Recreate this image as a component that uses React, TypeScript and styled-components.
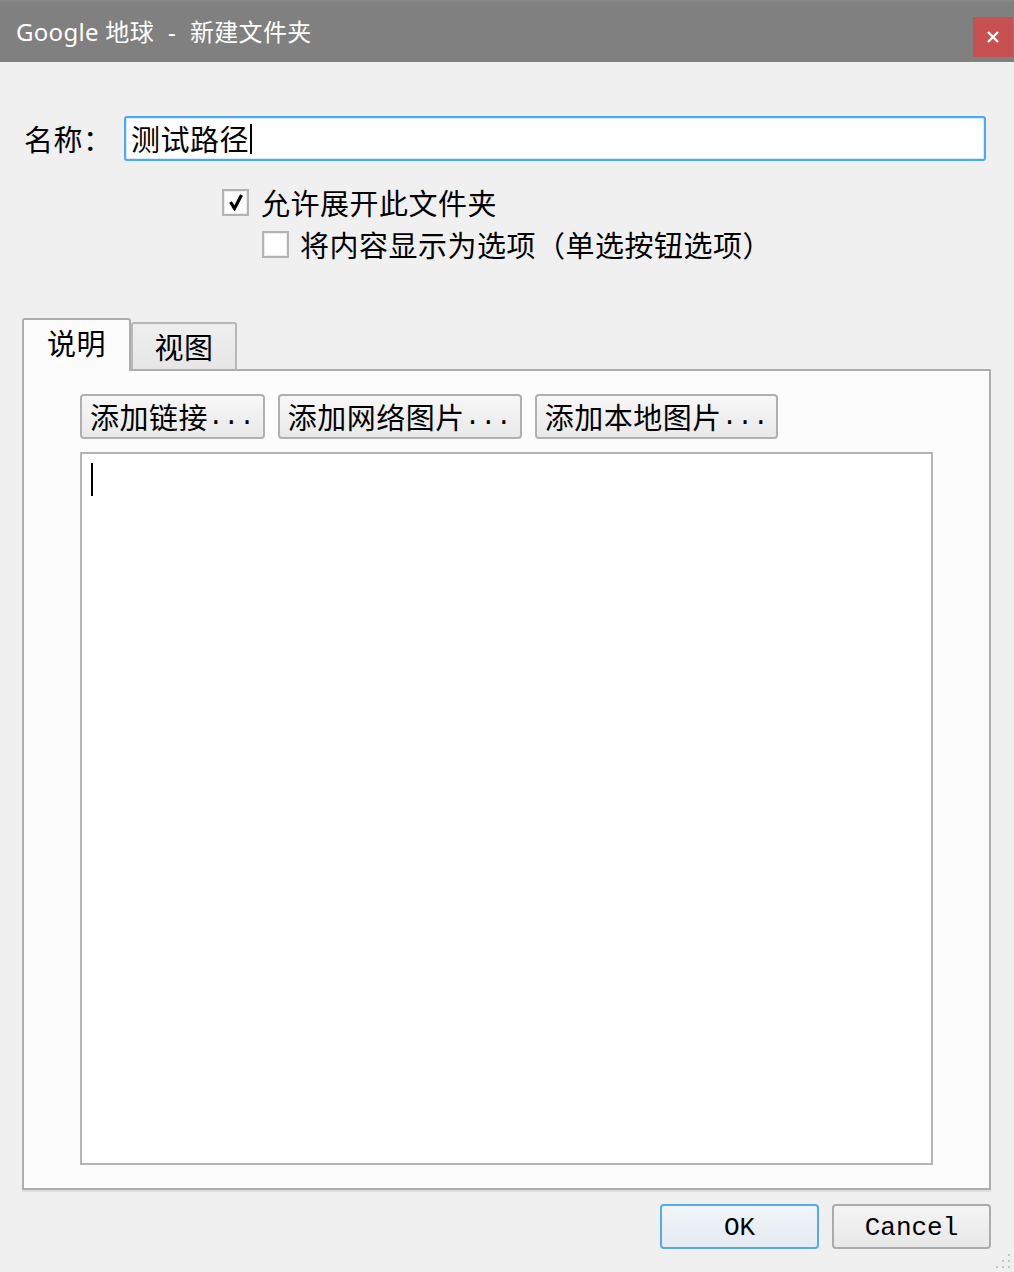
import React from "react";
import styled, { createGlobalStyle } from "styled-components";

const GlobalStyle = createGlobalStyle`
  html, body { margin: 0; padding: 0; background: #f0f0f0; }
  * { box-sizing: border-box; }
`;

const CJK = `"Noto Sans CJK SC", "Noto Sans", sans-serif`;

const Window = styled.div`
  position: relative;
  width: 1014px;
  height: 1272px;
  background: #f0f0f0;
  display: flex;
  flex-direction: column;
  font-family: ${CJK};
  color: #000;
  overflow: hidden;
`;

const TitleBar = styled.div`
  height: 62px;
  flex: none;
  background: #808080;
  border-top: 2px solid #888888;
  display: flex;
  align-items: center;
  justify-content: space-between;
  padding-left: 16px;
`;

const Title = styled.div`
  font-family: "Noto Sans", "Noto Sans CJK SC", sans-serif;
  font-size: 24px;
  color: #ffffff;
  white-space: pre;
  line-height: 1;
  letter-spacing: 0.3px;
`;

const Separator = styled.span`
  padding: 0 14px 0 14px;
`;

const CloseButton = styled.div`
  align-self: flex-start;
  margin-top: 15px;
  margin-right: 1px;
  width: 40px;
  height: 40px;
  background: #c75050;
  display: flex;
  align-items: center;
  justify-content: center;
`;

const Content = styled.div`
  flex: 1;
  display: flex;
  flex-direction: column;
  padding: 0 23px 0 22px;
  font-size: 29px;
  letter-spacing: 0.5px;
`;

const NameRow = styled.div`
  display: flex;
  align-items: center;
  margin-top: 54px;
  padding-left: 2px;
  margin-right: 5px;
`;

const Label = styled.div`
  width: 100px;
  flex: none;
  line-height: 1;
`;

const TextInput = styled.div`
  flex: 1;
  height: 45px;
  background: #ffffff;
  border: 2px solid #4aa9fb;
  border-radius: 3px;
  box-shadow: inset 0 0 0 1px #d9ecfd;
  display: flex;
  align-items: center;
  padding-left: 5px;
  font-size: 29px;
  line-height: 1;
`;

const Caret = styled.span<{ $h: number }>`
  display: inline-block;
  width: 2px;
  height: ${(p) => p.$h}px;
  background: #000;
  margin-left: 1px;
`;

const CheckRow = styled.div<{ $indent: number; $gap: number }>`
  display: flex;
  align-items: center;
  height: 42px;
  margin-left: ${(p) => p.$indent}px;
  gap: ${(p) => p.$gap}px;
  line-height: 1;
`;

const FirstCheckRow = styled(CheckRow)`
  margin-top: 20px;
`;

const Box = styled.div`
  width: 27px;
  height: 27px;
  flex: none;
  background: #ffffff;
  border: 2px solid #b3b3b3;
  box-shadow: inset 0 0 0 1px #ececec;
  display: flex;
  align-items: center;
  justify-content: center;
`;

const Tabs = styled.div`
  margin-top: 53px;
  flex: 1;
  display: flex;
  flex-direction: column;
`;

const TabRow = styled.div`
  display: flex;
  align-items: flex-end;
`;

const Tab = styled.div<{ $active?: boolean }>`
  position: relative;
  z-index: ${(p) => (p.$active ? 1 : 0)};
  width: ${(p) => (p.$active ? 109 : 106)}px;
  height: ${(p) => (p.$active ? 53 : 47)}px;
  margin-bottom: ${(p) => (p.$active ? -2 : 0)}px;
  background: ${(p) =>
    p.$active ? "#fcfcfc" : "linear-gradient(#efefef, #e6e6e6)"};
  border: 2px solid ${(p) => (p.$active ? "#adadad" : "#b8b8b8")};
  border-bottom: none;
  border-radius: 3px 3px 0 0;
  display: flex;
  align-items: center;
  justify-content: center;
  padding-bottom: ${(p) => (p.$active ? 7 : 0)}px;
  font-size: 29px;
  line-height: 1;
`;

const Pane = styled.div`
  flex: 1;
  background: #fcfcfc;
  border: 2px solid #adadad;
  box-shadow: 0 2px 0 #dedede;
  display: flex;
  flex-direction: column;
  padding: 23px 56px 23px 56px;
`;

const ButtonRow = styled.div`
  display: flex;
  gap: 13px;
`;

const Button = styled.div`
  height: 45px;
  padding: 0 8px;
  border: 2px solid #b0b0b0;
  border-radius: 4px;
  background: linear-gradient(#f7f7f7, #e9e9e9);
  display: flex;
  align-items: center;
  font-size: 29px;
  line-height: 1;
  white-space: pre;
`;

const Latin = styled.span`
  font-family: "Liberation Mono", monospace;
  font-size: 26px;
  letter-spacing: 0;
`;

const TextArea = styled.div`
  margin-top: 13px;
  flex: 1;
  background: #ffffff;
  border: 2px solid #b4b4b4;
  padding: 8px 8px;
`;

const Footer = styled.div`
  display: flex;
  justify-content: flex-end;
  gap: 13px;
  margin: 14px 23px 23px 0;
  flex: none;
`;

const DialogButton = styled.div<{ $default?: boolean }>`
  width: 159px;
  height: 45px;
  border: 2px solid ${(p) => (p.$default ? "#55a9f0" : "#ababab")};
  border-radius: 4px;
  background: ${(p) =>
    p.$default
      ? "linear-gradient(#f1f5f9, #e5ebf1)"
      : "linear-gradient(#f4f4f4, #e8e8e8)"};
  display: flex;
  align-items: center;
  justify-content: center;
  padding-top: 3px;
  font-family: "Liberation Mono", monospace;
  font-size: 26px;
  line-height: 1;
`;

const Grip = styled.svg`
  position: absolute;
  right: 2px;
  bottom: 2px;
`;

const Check = () => (
  <svg width="16" height="18" viewBox="0 0 16 18">
    <path d="M2.5 9 L6.5 15.5 L13.5 2" fill="none" stroke="#000" strokeWidth="3.2" />
  </svg>
);

export default function App() {
  return (
    <>
      <GlobalStyle />
      <Window>
        <TitleBar>
          <Title>
            Google 地球<Separator>-</Separator>新建文件夹
          </Title>
          <CloseButton>
            <svg width="12" height="12" viewBox="0 0 12 12">
              <path d="M1 1 L11 11 M11 1 L1 11" stroke="#fff" strokeWidth="2.4" />
            </svg>
          </CloseButton>
        </TitleBar>
        <Content>
          <NameRow>
            <Label>名称：</Label>
            <TextInput>
              测试路径
              <Caret $h={30} />
            </TextInput>
          </NameRow>
          <FirstCheckRow $indent={200} $gap={12}>
            <Box>
              <Check />
            </Box>
            <span>允许展开此文件夹</span>
          </FirstCheckRow>
          <CheckRow $indent={240} $gap={11}>
            <Box />
            <span>将内容显示为选项（单选按钮选项）</span>
          </CheckRow>
          <Tabs>
            <TabRow>
              <Tab $active>说明</Tab>
              <Tab>视图</Tab>
            </TabRow>
            <Pane>
              <ButtonRow>
                <Button>
                  添加链接<Latin>...</Latin>
                </Button>
                <Button>
                  添加网络图片<Latin>...</Latin>
                </Button>
                <Button>
                  添加本地图片<Latin>...</Latin>
                </Button>
              </ButtonRow>
              <TextArea>
                <Caret $h={33} />
              </TextArea>
            </Pane>
          </Tabs>
        </Content>
        <Footer>
          <DialogButton $default>OK</DialogButton>
          <DialogButton>Cancel</DialogButton>
        </Footer>
        <Grip width="20" height="20" viewBox="0 0 20 20">
          {[
            [16, 4],
            [16, 10],
            [10, 10],
            [16, 16],
            [10, 16],
            [4, 16],
          ].map(([x, y]) => (
            <rect key={`${x}-${y}`} x={x} y={y} width="2" height="2" fill="#c4c4c4" />
          ))}
        </Grip>
      </Window>
    </>
  );
}
